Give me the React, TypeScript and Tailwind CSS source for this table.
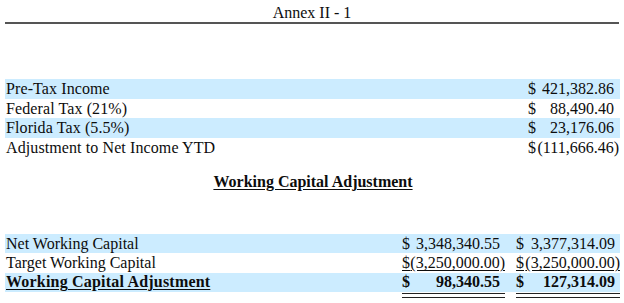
import React from 'react';

type Amt = { v: string; neg?: boolean };

const rows1: { label: string; amt: Amt; shade: boolean }[] = [
  { label: 'Pre-Tax Income', amt: { v: '421,382.86' }, shade: true },
  { label: 'Federal Tax (21%)', amt: { v: '88,490.40' }, shade: false },
  { label: 'Florida Tax (5.5%)', amt: { v: '23,176.06' }, shade: true },
  { label: 'Adjustment to Net Income YTD', amt: { v: '(111,666.46)', neg: true }, shade: false },
];

const Money = ({ amt, className = '', under = false }: { amt: Amt; className?: string; under?: boolean }) => (
  <div className={`flex justify-between ${className}`}>
    <span className={under ? 'underline underline-offset-2' : ''}>$</span>
    <span className={`${amt.neg ? '' : 'pr-[5px]'} ${under ? 'underline underline-offset-2' : ''}`}>{amt.v}</span>
  </div>
);

export default function App() {
  return (
    <div className="w-[624px] h-[303px] bg-white text-[#0d0d0d] text-[16px] leading-[19.5px] font-['Liberation_Serif','Times_New_Roman',serif] overflow-hidden">
      {/* header */}
      <div className="mx-[5px] h-[24px] pt-[4px] leading-[18px] text-center border-b-2 border-[#555]">Annex II - 1</div>

      {/* income table */}
      <div className="mt-[55px] mx-[5px] mr-[4px] flex flex-col">
        {rows1.map((r) => (
          <div key={r.label} className={`h-[19.5px] flex items-center justify-between pl-[1px] ${r.shade ? 'bg-[#ccecff]' : ''}`}>
            <span className="tracking-[0.1px]">{r.label}</span>
            <Money amt={r.amt} className="w-[92px] pr-[1px]" />
          </div>
        ))}
      </div>

      {/* heading */}
      <div className="mt-[15px] text-center font-bold underline underline-offset-2 pl-[2px]">Working Capital Adjustment</div>

      {/* working capital table */}
      <div className="mt-[42px] mx-[5px] mr-[4px] flex flex-col">
        <div className="h-[19.5px] flex items-center bg-[#ccecff] pl-[1px]">
          <span className="flex-1">Net Working Capital</span>
          <Money amt={{ v: '3,348,340.55' }} className="w-[103px]" />
          <Money amt={{ v: '3,377,314.09' }} className="w-[104px] ml-[11px]" />
        </div>
        <div className="h-[19.5px] flex items-center pl-[1px]">
          <span className="flex-1">Target Working Capital</span>
          <Money amt={{ v: '(3,250,000.00)', neg: true }} under className="w-[103px]" />
          <Money amt={{ v: '(3,250,000.00)', neg: true }} under className="w-[104px] ml-[11px]" />
        </div>
        <div className="h-[19px] flex items-center bg-[#ccecff] pl-[1px] font-bold">
          <span className="flex-1 underline underline-offset-2 tracking-[0.2px]">Working Capital Adjustment</span>
          <Money amt={{ v: '98,340.55' }} className="w-[103px]" />
          <Money amt={{ v: '127,314.09' }} className="w-[104px] ml-[11px]" />
        </div>
        <div className="flex h-[5px] mt-[1px]">
          <span className="flex-1" />
          <span className="w-[103px] border-y border-[#222]" />
          <span className="w-[104px] ml-[11px] border-y border-[#222]" />
        </div>
      </div>
    </div>
  );
}
